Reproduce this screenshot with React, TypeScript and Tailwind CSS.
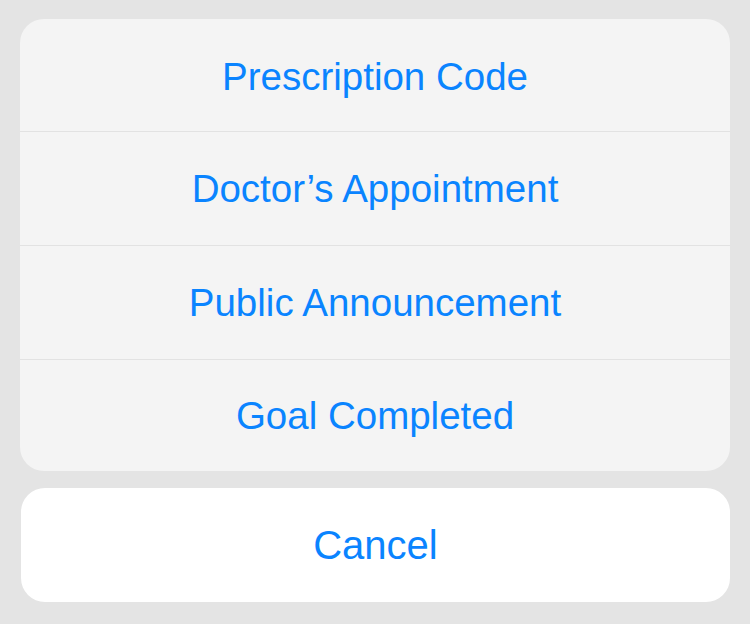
const options = [
  "Prescription Code",
  "Doctor\u2019s Appointment",
  "Public Announcement",
  "Goal Completed",
];

export default function App() {
  return (
    <div
      className="w-[750px] h-[624px] bg-[#e4e4e4] px-5 pt-[19px]"
      style={{ fontFamily: '"Liberation Sans", Arial, sans-serif' }}
    >
      {/* Action list */}
      <div className="rounded-[24px] bg-[#f4f4f4] overflow-hidden divide-y divide-[#e2e2e2]">
        {options.map((label) => (
          <button
            key={label}
            className="w-full h-[114px] first:h-[113px] first:pt-[3px] last:h-[111px] flex items-center justify-center text-[38.5px] text-[#0a84ff]"
          >
            {label}
          </button>
        ))}
      </div>

      {/* Cancel */}
      <button className="mt-[17px] ml-px w-[709px] h-[114px] rounded-[24px] bg-white flex items-center justify-center text-[40px] text-[#0a84ff]">
        Cancel
      </button>
    </div>
  );
}
